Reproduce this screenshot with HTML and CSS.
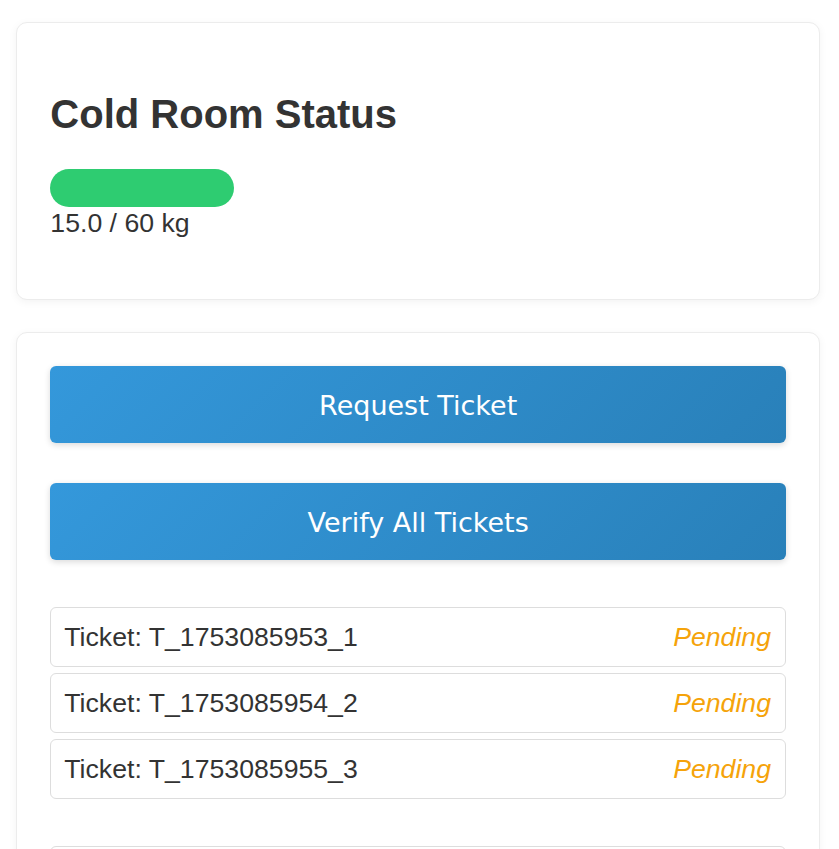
FILE: index.html
```html
<!DOCTYPE html>
<html lang="en">
<head>
<meta charset="utf-8">
<title>Cold Room</title>
<link rel="stylesheet" href="styles.css">
</head>
<body>
<main class="page">
  <section class="card status-card">
    <h2 class="title">Cold Room Status</h2>
    <div class="bar-track"><div class="bar-fill" style="width:25%"></div></div>
    <div class="weight">15.0 / 60 kg</div>
  </section>
  <section class="card actions-card">
    <button class="btn">Request Ticket</button>
    <button class="btn">Verify All Tickets</button>
    <ul class="tickets">
      <li class="ticket"><span class="ticket-id">Ticket: T_1753085953_1</span><span class="ticket-status">Pending</span></li>
      <li class="ticket"><span class="ticket-id">Ticket: T_1753085954_2</span><span class="ticket-status">Pending</span></li>
      <li class="ticket"><span class="ticket-id">Ticket: T_1753085955_3</span><span class="ticket-status">Pending</span></li>
    </ul>
    <div class="log-box"></div>
  </section>
</main>
</body>
</html>
```
FILE: styles.css
```css
html, body {
  margin: 0;
  padding: 0;
  background: #ffffff;
}
body {
  font-family: "Liberation Sans", Arial, sans-serif;
  color: #333333;
}
.page {
  padding: 22px 19px 0 16px;
}
.card {
  background: #ffffff;
  border: 1px solid #ececec;
  border-radius: 11px;
  box-shadow: 0 2px 8px rgba(0, 0, 0, 0.05);
  padding: 33.33px 33px 33.33px 33.33px;
}
.status-card {
  padding-bottom: 60px;
}
.actions-card {
  margin-top: 32.5px;
  padding-bottom: 80px;
}
.title {
  margin: 35px 0 32px;
  font-size: 40px;
  font-weight: bold;
  line-height: 46px;
  color: #333333;
}
.bar-track {
  width: 100%;
  height: 37.5px;
}
.bar-fill {
  height: 100%;
  background: #2ecc71;
  border-radius: 19px;
}
.weight {
  font-size: 26.67px;
  line-height: 30.67px;
  padding-top: 1px;
}
.btn {
  display: block;
  width: 100%;
  border: none;
  border-radius: 6px;
  padding: 24px 0 22px;
  font-family: "DejaVu Sans", sans-serif;
  font-size: 27px;
  line-height: 31px;
  color: #ffffff;
  background: linear-gradient(135deg, #3498db, #2980b9);
  box-shadow: 0 2px 6px rgba(0, 0, 0, 0.15);
  text-align: center;
}
.btn + .btn {
  margin-top: 40px;
}
.tickets {
  list-style: none;
  margin: 47px 0 0;
  padding: 0;
  display: flex;
  flex-direction: column;
  gap: 6.67px;
}
.ticket {
  display: flex;
  justify-content: space-between;
  align-items: center;
  border: 1px solid #dddddd;
  border-radius: 6px;
  padding: 13.33px 14px 13.33px 13px;
  font-size: 26.67px;
  line-height: 30.67px;
}
.ticket-status {
  color: #f5a30a;
  font-style: italic;
}
.log-box {
  margin-top: 47.5px;
  height: 120px;
  border: 1px solid #dddddd;
  border-radius: 6px;
}
```
